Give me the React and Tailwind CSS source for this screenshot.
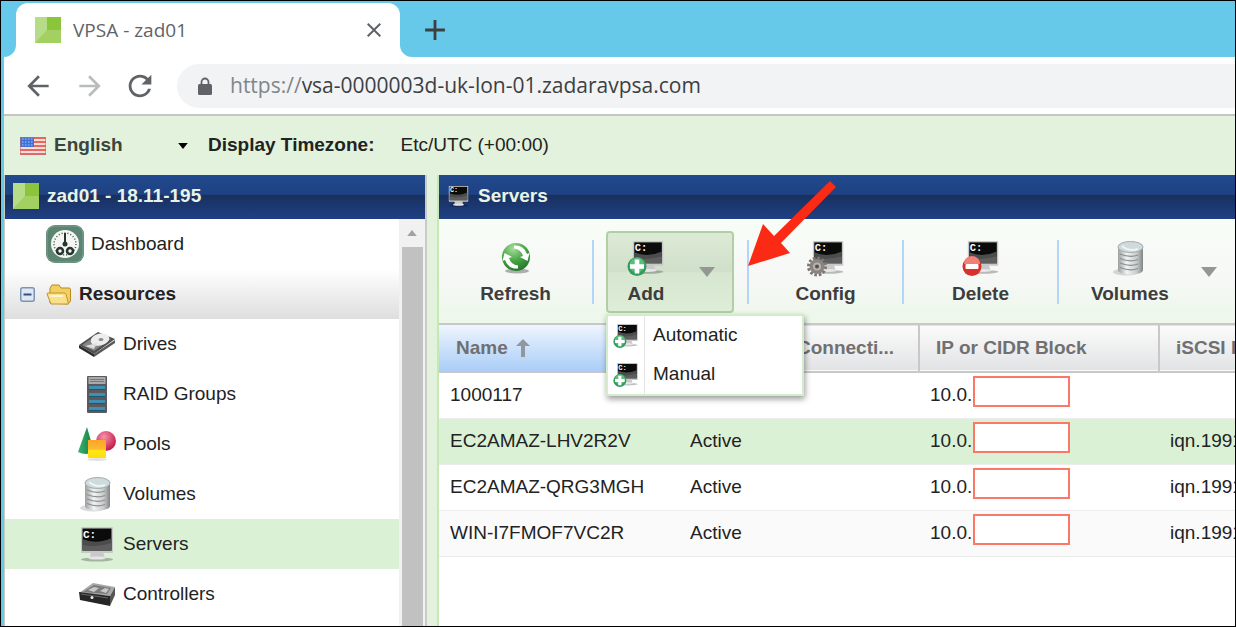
import { useState } from 'react';
import { MdArrowBack, MdArrowForward, MdRefresh, MdClose, MdAdd } from 'react-icons/md';

const BrandIcon = () => (
  <svg viewBox="0 0 26 26" className="size-[26px] shrink-0">
    <rect width="26" height="26" fill="#a2d061" />
    <path d="M0 0h12v13L0 26z" fill="#b7dc88" />
    <path d="M12 0h14v13H12z" fill="#8bc53c" />
  </svg>
);

const LockIcon = () => (
  <svg viewBox="0 0 14 18" className="h-[18px] w-3.5">
    <rect y="7" width="14" height="11" rx="1.500" fill="currentColor" />
    <path d="M3.500 8V5a3.500 3.500 0 0 1 7 0v3" fill="none" stroke="currentColor" strokeWidth="1.800" />
  </svg>
);

const FlagIcon = () => (
  <svg viewBox="0 0 26 18" className="h-[18px] w-[26px] shrink-0">
    <rect width="26" height="18" fill="#f8dcd8" />
    {[0, 4, 8, 12, 16].map((y) => (
      <rect key={y} y={y} width="26" height="2" fill="#ea6660" />
    ))}
    <rect width="14" height="10" fill="#3f72d8" />
    {[2, 5, 8].map((y) => (
      <path key={y} d={`M2 ${y}h11`} stroke="#a9c2f2" strokeWidth="1" strokeDasharray="1.5 1.5" />
    ))}
    <rect x=".5" y=".5" width="25" height="17" fill="none" stroke="#c46a70" strokeOpacity=".6" />
  </svg>
);

const MonitorShape = () => (
  <>
    <ellipse cx="19" cy="33.500" rx="16" ry="2" fill="#000" opacity=".25" />
    <path d="M13 26h12l2 6H12z" fill="#c9c9c9" />
    <ellipse cx="19" cy="32" rx="9" ry="1.600" fill="#e6e6e6" />
    <rect x="3" y="1" width="32" height="26" rx="1" fill="#c8c8c8" />
    <rect x="4.500" y="2.500" width="29" height="22" fill="#0b0b0b" />
    <path d="M4.500 13q14 6 29-1v12.500h-29z" fill="#4c4c4c" />
    <path d="M4.500 19q14 3 29-2v7.500h-29z" fill="#6a6a6a" opacity=".6" />
    <text x="5" y="11.500" fontSize="11" fontWeight="700" fontFamily="Liberation Mono, monospace" fill="#fff">C:</text>
  </>
);

const MonitorIcon = ({ className, badge }) => (
  <svg viewBox="0 0 38 37" className={className}>
    {badge ? (
      <g transform="translate(3 0) scale(.95)">
        <MonitorShape />
      </g>
    ) : (
      <MonitorShape />
    )}
    {badge === 'add' && (
      <g>
        <circle cx="10" cy="26.500" r="9.500" fill="#2f9e5b" />
        <circle cx="10" cy="25" r="7.500" fill="#6fc98c" opacity=".7" />
        <path d="M7.700 19.500h4.600v4.700H17v4.600h-4.700v4.700H7.700v-4.700H3v-4.600h4.700z" fill="#fff" />
      </g>
    )}
    {badge === 'delete' && (
      <g>
        <circle cx="10" cy="26.500" r="9.500" fill="#d8302a" />
        <path d="M2 24a8 8 0 0 1 16 0z" fill="#f08078" />
        <rect x="3.500" y="24" width="13" height="5" rx="1" fill="#fff" />
      </g>
    )}
    {badge === 'config' && (
      <g>
        <circle cx="10" cy="26.500" r="8.500" fill="none" stroke="#7c7672" strokeWidth="3" strokeDasharray="2.600 1.850" />
        <circle cx="10" cy="26.500" r="7.500" fill="#8b8480" />
        <circle cx="10" cy="26.500" r="4" fill="#b7b0ac" />
        <circle cx="10" cy="26.500" r="2" fill="#55504d" />
      </g>
    )}
  </svg>
);

const RefreshIcon = () => (
  <svg viewBox="0 0 32 32" className="size-8">
    <defs>
      <radialGradient id="ball" cx=".4" cy=".2" r=".9">
        <stop offset="0" stopColor="#a5dd9a" />
        <stop offset=".5" stopColor="#45a445" />
        <stop offset="1" stopColor="#1d6e26" />
      </radialGradient>
    </defs>
    <ellipse cx="17" cy="29" rx="12" ry="2.500" fill="#000" opacity=".3" />
    <circle cx="16" cy="15" r="14" fill="url(#ball)" />
    <path d="M14 3.500q10-.5 13 8.500l2.500-1-2 8-7.500-4 3-1q-2-7-9-7.500z" fill="#fff" />
    <path d="M18 26.500q-10 .5-13-8.500l-2.500 1 2-8 7.500 4-3 1q2 7 9 7.500z" fill="#fff" />
  </svg>
);

const VolumeIcon = ({ className }) => (
  <svg viewBox="0 0 38 37" className={className}>
    <defs>
      <linearGradient id="drum">
        <stop offset="0" stopColor="#9b9f9f" />
        <stop offset=".35" stopColor="#f2f4f4" />
        <stop offset=".75" stopColor="#c6caca" />
        <stop offset="1" stopColor="#808585" />
      </linearGradient>
    </defs>
    <ellipse cx="15" cy="32" rx="13" ry="3.500" fill="#000" opacity=".14" />
    <path d="M7 7v23c0 6 25 6 25 0V7z" fill="url(#drum)" />
    <path d="M9 14q10 4 18 1M9 18.500q10 4 18 1M9 23q10 4 18 1M9 27.500q10 4 18 1" stroke="#8a8f8f" strokeWidth="1.300" fill="none" />
    <ellipse cx="19.500" cy="7" rx="12.500" ry="5.500" fill="#cfdadc" stroke="#a4abab" />
    <path d="M11 6q7 6 16 3" stroke="#edf4f5" strokeWidth="2" fill="none" />
  </svg>
);

const DriveIcon = () => (
  <svg viewBox="0 0 38 28" className="h-7 w-[38px]">
    <path d="M1 15l15 9v3L1 18z" fill="#2b2b2b" />
    <path d="M16 24L37 10v3L16 27z" fill="#5a5a5a" />
    <path d="M1 15L20 2l17 7-21 15z" fill="#4f4f4f" />
    <path d="M4 15L20 4l13 5-17 12z" fill="#858585" />
    <ellipse cx="22" cy="9.500" rx="9.500" ry="6" fill="#ededed" transform="rotate(-14 22 9.500)" />
    <ellipse cx="23" cy="9.500" rx="2.500" ry="1.500" fill="#8d8d8d" />
    <path d="M7 16l12-3-3 6z" fill="#ddd" />
  </svg>
);

const RaidIcon = () => (
  <svg viewBox="0 0 20 37" className="h-[37px] w-5">
    <rect width="20" height="37" rx="1" fill="#5a5a5c" />
    <rect x="1.500" y="1" width="17" height="7" fill="#a9a9ab" />
    <path d="M3 3.500h14M3 5.500h14" stroke="#7a7a7c" />
    {[10, 17, 24, 31].map((y) => (
      <g key={y}>
        <rect x="2" y={y} width="16" height="4" fill="#3f8fb5" />
        <rect x="2" y={y + 3} width="16" height="1" fill="#24546c" />
      </g>
    ))}
  </svg>
);

const PoolsIcon = () => (
  <svg viewBox="0 0 38 34" className="h-[34px] w-[38px]">
    <defs>
      <radialGradient id="pinkBall" cx=".4" cy=".3" r=".7">
        <stop offset="0" stopColor="#f792ac" />
        <stop offset="1" stopColor="#c4174a" />
      </radialGradient>
      <linearGradient id="cone">
        <stop offset="0" stopColor="#3cb371" />
        <stop offset="1" stopColor="#0d7c3c" />
      </linearGradient>
      <linearGradient id="cube" x2="0" y2="1">
        <stop offset="0" stopColor="#fda52b" />
        <stop offset=".5" stopColor="#fdb92b" />
        <stop offset=".6" stopColor="#ffe813" />
        <stop offset="1" stopColor="#fddc10" />
      </linearGradient>
    </defs>
    <ellipse cx="19" cy="32.500" rx="10" ry="1.500" fill="#000" opacity=".12" />
    <path d="M9 0l7 25q-8 4-16 0z" fill="url(#cone)" />
    <circle cx="28" cy="14" r="10" fill="url(#pinkBall)" />
    <rect x="10" y="13" width="18" height="18" fill="url(#cube)" />
  </svg>
);

const ControllerIcon = () => (
  <svg viewBox="0 0 38 24" className="h-6 w-[38px]">
    <path d="M1 11L15 1l22 4-5 9z" fill="#a8a8a8" />
    <path d="M5 10l11-7 17 3-4 6z" fill="#7b7b7b" />
    <path d="M10 8l6-3 5 1-5 4zM22 9l5-3 4 1-3 4z" fill="#c8c8c8" />
    <path d="M1 10l31 4v10L2 18z" fill="#262626" />
    <path d="M32 14l5-9v8l-5 11z" fill="#555" />
    <path d="M3 12l27 4" stroke="#666" />
    <circle cx="14" cy="15.500" r="1.500" fill="#eee" />
  </svg>
);

const DashboardIcon = () => (
  <svg viewBox="0 0 38 38" className="size-[38px]">
    <rect width="38" height="38" rx="9" fill="#5c8571" />
    <rect x="1" y="1" width="36" height="36" rx="8" fill="none" stroke="#7d9f8e" />
    <circle cx="19" cy="19" r="14" fill="#f4f6f4" />
    <circle cx="19" cy="19" r="11" fill="none" stroke="#3f5148" strokeWidth="1.500" strokeDasharray="1 2" />
    <path d="M19 8v12" stroke="#26352d" strokeWidth="2" />
    <circle cx="19" cy="19" r="2.500" fill="#26352d" />
    <circle cx="14" cy="26" r="3" fill="none" stroke="#26352d" strokeWidth="2.500" />
    <circle cx="24" cy="26" r="3" fill="none" stroke="#26352d" strokeWidth="2.500" />
  </svg>
);

const FolderIcon = () => (
  <svg viewBox="0 0 26 21" className="h-[21px] w-[26px]">
    <path d="M4 19V4l2-3h7l2 3h8q1.500 0 1.500 1.500V17L22 20z" fill="#f2cf63" stroke="#b98a1f" />
    <path d="M1 10q0-1 1-1h16q1.500 0 2 1l2.500 10H5z" fill="#fbe08a" stroke="#c2922a" />
    <path d="M4 12h13" stroke="#fff6cf" strokeWidth="2" />
  </svg>
);

const CollapseIcon = () => (
  <svg viewBox="0 0 15 15" className="size-[15px]">
    <rect x=".75" y=".75" width="13.500" height="13.500" rx="2" fill="#dfe8f2" stroke="#7d93b2" strokeWidth="1.500" />
    <path d="M3.500 7.500h8" stroke="#34507c" strokeWidth="2" />
  </svg>
);

const Caret = ({ className }) => (
  <svg viewBox="0 0 16 10" className={className}>
    <path d="M0 0h16l-8 10z" fill="currentColor" />
  </svg>
);

const resources = [
  { name: 'Drives', icon: <DriveIcon /> },
  { name: 'RAID Groups', icon: <RaidIcon /> },
  { name: 'Pools', icon: <PoolsIcon /> },
  { name: 'Volumes', icon: <VolumeIcon className="h-[37px] w-[38px]" /> },
  { name: 'Servers', icon: <MonitorIcon className="h-[37px] w-[38px]" /> },
  { name: 'Controllers', icon: <ControllerIcon /> },
];

const servers = [
  { name: '1000117', status: '', ip: '10.0.', iqn: '' },
  { name: 'EC2AMAZ-LHV2R2V', status: 'Active', ip: '10.0.', iqn: 'iqn.1991' },
  { name: 'EC2AMAZ-QRG3MGH', status: 'Active', ip: '10.0.', iqn: 'iqn.1991' },
  { name: 'WIN-I7FMOF7VC2R', status: 'Active', ip: '10.0.', iqn: 'iqn.1991' },
];

const BrowserBar = () => (
  <header className="font-['Open_Sans',sans-serif] text-[#5f6368]">
    <div className="flex h-14 items-end bg-[#66c9ea]">
      <div className="size-3 bg-white">
        <div className="size-3 rounded-br-xl bg-[#66c9ea]" />
      </div>
      <div className="flex h-[54px] w-96 items-center rounded-t-xl bg-white pr-3.5 pl-[19px]">
        <BrandIcon />
        <span className="ml-3 flex-1 text-[19px]">VPSA - zad01</span>
        <button aria-label="Close tab">
          <MdClose className="size-6" />
        </button>
      </div>
      <div className="size-3 bg-white">
        <div className="size-3 rounded-bl-xl bg-[#66c9ea]" />
      </div>
      <button aria-label="New tab" className="ml-1.5 flex h-[54px] items-center text-[#3c4043]">
        <MdAdd className="size-[34px]" />
      </button>
    </div>
    <div className="flex h-[59px] items-center border-b-2 border-[#c3c6c3] bg-white pl-[18px]">
      <button aria-label="Back">
        <MdArrowBack className="size-8" />
      </button>
      <button aria-label="Forward" className="ml-5 text-[#b9bbbd]">
        <MdArrowForward className="size-8" />
      </button>
      <button aria-label="Reload" className="ml-[17px]">
        <MdRefresh className="size-[34px]" />
      </button>
      <label className="ml-5 flex h-11 flex-1 items-center rounded-l-full bg-[#f1f3f4] pl-[21px] text-[21px]">
        <LockIcon />
        <span className="ml-[18px] text-[#80868b]">https://</span>
        <input
          aria-label="Address"
          defaultValue="vsa-0000003d-uk-lon-01.zadaravpsa.com"
          className="flex-1 bg-transparent text-[#3c4043] outline-none"
        />
      </label>
    </div>
  </header>
);

const PanelHeader = ({ icon, title }) => (
  <h2 className="flex h-11 shrink-0 items-center gap-2 bg-[linear-gradient(#21498e_0%,#1e4282_44%,#19305f_46%,#1f4085_100%)] px-2 pb-0.5 font-bold text-[#eaf4e6]">
    {icon}
    {title}
  </h2>
);

const Sidebar = () => (
  <aside className="flex w-[422px] shrink-0 flex-col border-r-2 border-[#c9cbc9] bg-white">
    <PanelHeader icon={<BrandIcon />} title="zad01 - 18.11-195" />
    <div className="flex min-h-0 flex-1">
      <nav className="flex-1">
        <button className="flex h-[50px] w-full items-center gap-[7px] pl-[41px]">
          <DashboardIcon />
          Dashboard
        </button>
        <button className="flex h-[50px] w-full items-center bg-linear-to-b from-white to-[#dedede] pl-[15px] font-bold">
          <CollapseIcon />
          <span className="mr-[7px] ml-[11px]">
            <FolderIcon />
          </span>
          Resources
        </button>
        {resources.map((item) => (
          <button
            key={item.name}
            className={`flex h-[50px] w-full items-center gap-[7px] pl-[73px] ${item.name === 'Servers' ? 'bg-[#dbf1d6]' : ''}`}
          >
            <span className="flex w-[38px] justify-center">{item.icon}</span>
            {item.name}
          </button>
        ))}
      </nav>
      <div className="flex w-[26px] flex-col items-center bg-[#f1f1f1]">
        <div className="flex h-7 items-center">
          <Caret className="h-1.5 w-3 rotate-180 text-[#a3a3a3]" />
        </div>
        <div className="w-[21px] flex-1 bg-[#c1c1c1]" />
      </div>
    </div>
  </aside>
);

const ToolButton = ({ icon, label }) => (
  <div className="flex h-16 w-[155px] shrink-0 justify-center border-r-2 border-[#b3d5f8]">
    <button className="flex flex-col items-center justify-between">
      <span className="flex h-9 items-center">{icon}</span>
      <span className="leading-5">{label}</span>
    </button>
  </div>
);

const AddMenu = () => (
  <ul className="absolute top-[83px] left-0 z-10 w-[198px] border-2 border-[#d3eccb] bg-white font-normal text-[#222] shadow-[1px_3px_6px_rgba(0,0,0,0.4)]">
    {['Automatic', 'Manual'].map((label) => (
      <li key={label}>
        <button className="flex h-[39px] w-full items-center">
          <span className="flex h-full w-[37px] items-center justify-center border-r border-[#e6e6e6]">
            <MonitorIcon badge="add" className="size-[26px]" />
          </span>
          <span className="ml-2">{label}</span>
        </button>
      </li>
    ))}
  </ul>
);

const Toolbar = () => {
  const [open, setOpen] = useState(true);

  return (
    <div className="relative flex h-[104px] shrink-0 items-center bg-linear-to-b from-[#f8fdf6] via-[#f7f8f7] to-[#edf7ea] pt-0.5 font-bold text-[#3d3d3d]">
      <ToolButton icon={<RefreshIcon />} label="Refresh" />
      <div className="flex h-16 w-[155px] shrink-0 items-center border-r-2 border-[#b3d5f8] pl-3">
        <div className="relative">
          <button
            onClick={() => setOpen(!open)}
            className="flex h-[82px] w-32 items-center justify-between rounded border-2 border-[#b0d0a4] bg-[linear-gradient(#dcead6_0%,#d0dfca_49%,#d6e6d0_51%,#deedd8_100%)] pr-[17px] pl-[19px]"
          >
            <span className="flex h-16 flex-col items-center justify-between">
              <span className="flex h-9 items-center">
                <MonitorIcon badge="add" className="h-[37px] w-[38px]" />
              </span>
              <span className="leading-5">Add</span>
            </span>
            <Caret className="h-2.5 w-4 text-[#939893]" />
          </button>
          {open && <AddMenu />}
        </div>
      </div>
      <ToolButton icon={<MonitorIcon badge="config" className="h-[37px] w-[38px]" />} label="Config" />
      <ToolButton icon={<MonitorIcon badge="delete" className="h-[37px] w-[38px]" />} label="Delete" />
      <button className="flex h-16 shrink-0 items-center gap-8 pl-8">
        <span className="flex h-16 flex-col items-center justify-between">
          <span className="flex h-9 items-center">
            <VolumeIcon className="h-[37px] w-[38px]" />
          </span>
          <span className="leading-5">Volumes</span>
        </span>
        <Caret className="h-2.5 w-4 text-[#939893]" />
      </button>
      {/* callout pointing at the Add button */}
      <svg viewBox="0 0 88 86" className="pointer-events-none absolute -top-[38px] left-[309px] h-[86px] w-[88px]">
        <path d="M0 85L15 43l11 12L82 0l6 6L33 62l9 10z" fill="#fb2a15" />
      </svg>
    </div>
  );
};

const ServerTable = () => (
  <table className="w-[960px] table-fixed text-left">
    <colgroup>
      <col className="w-60" />
      <col className="w-[102px]" />
      <col className="w-[138px]" />
      <col className="w-60" />
      <col className="w-60" />
    </colgroup>
    <thead>
      <tr className="h-12 border-y-2 border-[#c8c8c8] bg-linear-to-b from-[#fbfbfb] to-[#e2e3e5] text-[#707070]">
        <th className="border-r-2 border-[#c8c8c8] bg-linear-to-b from-[#eef5fe] to-[#aacdf7] px-[17px]">
          <span className="flex items-center gap-2">
            Name
            <svg viewBox="0 0 14 18" className="h-[18px] w-3.5">
              <path d="M7 0l7 7H9v11H5V7H0z" fill="#8f979f" />
            </svg>
          </span>
        </th>
        <th />
        <th className="border-r-2 border-[#c8c8c8] pl-4 whitespace-nowrap">Connecti...</th>
        <th className="border-r-2 border-[#c8c8c8] px-4">IP or CIDR Block</th>
        <th className="px-4">iSCSI IQN</th>
      </tr>
    </thead>
    <tbody>
      {servers.map((server) => (
        <tr
          key={server.name}
          className="h-[46px] border-b border-[#ededed] nth-2:bg-[#dbf1d6] nth-4:bg-[#fafafa]"
        >
          <td className="px-[11px]">{server.name}</td>
          <td className="px-[11px]">{server.status}</td>
          <td />
          <td className="px-[11px]">
            <span className="flex items-center">
              {server.ip}
              <span className="mb-2 ml-px h-[31px] w-[97px] border-2 border-[#fa7865] bg-white" />
            </span>
          </td>
          <td className="px-[11px]">{server.iqn}</td>
        </tr>
      ))}
    </tbody>
  </table>
);

const App = () => (
  <div className="h-screen overflow-hidden border border-black bg-[#e2f2dc] font-['Liberation_Sans',Arial,sans-serif] text-[19px] text-[#222]">
    <div className="flex h-full flex-col border-l-3 border-[#66c9ea]">
      <BrowserBar />
      <div className="flex h-[59px] shrink-0 items-center pl-4">
        <FlagIcon />
        <div className="relative ml-2 flex w-[134px] items-center">
          <select aria-label="Language" className="w-full appearance-none bg-transparent font-bold text-[#3b453b] outline-none">
            <option>English</option>
          </select>
          <Caret className="pointer-events-none absolute right-0 h-1.5 w-2.5 text-black" />
        </div>
        <span className="ml-5 font-bold">Display Timezone:</span>
        <span className="ml-[26px]">Etc/UTC (+00:00)</span>
      </div>
      <main className="flex min-h-0 flex-1 gap-2.5 border-l border-[#c2cfc0]">
        <Sidebar />
        <section className="flex min-w-0 flex-1 flex-col overflow-hidden border-l-2 border-[#c5e8b7] bg-white">
          <PanelHeader icon={<MonitorIcon className="size-[23px]" />} title="Servers" />
          <Toolbar />
          <ServerTable />
        </section>
      </main>
    </div>
  </div>
);

export default App;
